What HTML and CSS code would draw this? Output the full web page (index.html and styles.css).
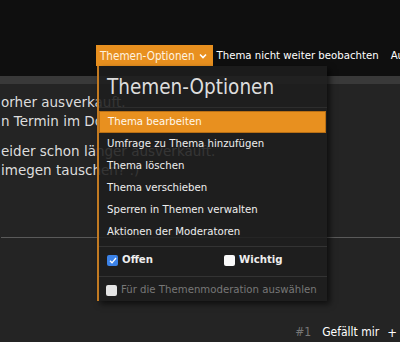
FILE: index.html
```html
<!DOCTYPE html>
<html lang="de">

<head>
    <meta charset="UTF-8">
    <meta name="viewport" content="width=device-width, initial-scale=1.0">
    <title>Themen-Optionen</title>
    <link rel="stylesheet" href="styles.css">
</head>

<body>
    <div class="topbar">
        <nav class="topic-nav">
            <div class="tab-wrap">
                <a class="tab active">Themen-Optionen
                    <svg class="chev" width="8" height="6" viewBox="0 0 8 6"><path d="M1 1.5 L4 4.5 L7 1.5" fill="none" stroke="#fff" stroke-width="1.6"/></svg>
                </a>
                <div class="menu">
                    <h3 class="menu-title">Themen-Optionen</h3>
                    <ul class="menu-list">
                        <li class="selected">Thema bearbeiten</li>
                        <li>Umfrage zu Thema hinzufügen</li>
                        <li>Thema löschen</li>
                        <li>Thema verschieben</li>
                        <li>Sperren in Themen verwalten</li>
                        <li>Aktionen der Moderatoren</li>
                    </ul>
                    <div class="menu-checks">
                        <label class="check"><span class="box checked">
                            <svg width="8" height="7" viewBox="0 0 8 7"><path d="M1 3.8 L3 5.8 L7 1" fill="none" stroke="#fff" stroke-width="1.3"/></svg>
                        </span>Offen</label>
                        <label class="check"><span class="box"></span>Wichtig</label>
                    </div>
                    <div class="menu-footer">
                        <label class="check muted"><span class="box"></span>Für die Themenmoderation auswählen</label>
                    </div>
                </div>
            </div>
            <a class="tab">Thema nicht weiter beobachten</a>
            <a class="tab">Aufrufe</a>
        </nav>
    </div>
    <div class="band"></div>

    <div class="post">
        <p>orher ausverkauft.</p>
        <p>n Termin im Dom.</p>
        <p class="gap">eider schon länger ausverkauft.</p>
        <p>imegen tauschen? :)</p>
        <hr class="post-rule">
    </div>

    <div class="post-footer">
        <span class="post-num">#1</span>
        <span class="like">Gefällt mir</span>
        <span class="plus">+</span>
    </div>
</body>

</html>
```

FILE: styles.css
```css
html,
body {
    margin: 0;
    padding: 0;
}

body {
    width: 400px;
    height: 342px;
    overflow: hidden;
    background: #242424;
    font-family: "DejaVu Sans Condensed", "DejaVu Sans", sans-serif;
    font-size: 11.3px;
    color: #eee;
}

.topbar {
    height: 76px;
    background: #0f0f0f;
    display: flex;
    align-items: flex-start;
}

.topic-nav {
    display: flex;
    margin: 45px 0 0 96px;
    white-space: nowrap;
}

.tab-wrap {
    position: relative;
}

.tab {
    display: flex;
    align-items: center;
    height: 21px;
    padding: 0 6px;
    color: #fff;
}

.tab.active {
    background: #e8901f;
    color: #fff3e0;
    font-size: 11.6px;
    padding: 0 6px 0 4px;
}

.tab-wrap + .tab {
    padding-left: 4px;
}

.chev {
    flex: none;
    margin-left: 4px;
}

.band {
    height: 8px;
    background: #393939;
}

.post {
    padding: 9px 0 0 1px;
    font-family: "DejaVu Sans", sans-serif;
    font-size: 13.5px;
    color: #ddd;
}

.post p {
    margin: 0;
    line-height: 19px;
}

.post p.gap {
    margin-top: 11px;
}

.post-rule {
    border: 0;
    border-top: 1px solid #5a5a5a;
    margin: 57px 0 0;
}

.post-footer {
    position: absolute;
    right: 3px;
    bottom: 2px;
    display: flex;
    font-size: 12px;
}

.post-num {
    color: #777;
    margin-right: 11px;
}

.like,
.plus {
    color: #fff;
}

.plus {
    margin-left: 8px;
    font-size: 13px;
}

/* dropdown */
.menu {
    position: absolute;
    top: 21px;
    left: 1px;
    width: 228px;
    background: rgba(30, 30, 30, 0.88);
    border-left: 2px solid #c27a22;
    box-shadow: 3px 3px 6px rgba(0, 0, 0, 0.6);
    z-index: 5;
}

.menu-title {
    margin: 0;
    padding: 9px 8px 8px;
    font-size: 20.5px;
    font-weight: normal;
    color: #ddd;
    border-bottom: 1px solid #2d2d2d;
}

.menu-list {
    list-style: none;
    margin: 0;
    padding: 3px 0 3px;
    border-bottom: 1px solid #333;
}

.menu-list li {
    padding: 0 8px;
    height: 22px;
    line-height: 22px;
    margin: 0 1px 0 0;
}

.menu-list li.selected {
    background: #e8901f;
    border: 1px solid #b86f15;
    height: 20px;
    line-height: 20px;
    color: #fff8ec;
}

.menu-checks {
    display: flex;
    padding: 6px 8px 9px;
    border-bottom: 1px solid #333;
}

.menu-checks .check {
    font-weight: bold;
}

.menu-checks .check:first-child {
    flex: none;
    width: 117px;
}

.check {
    display: flex;
    align-items: center;
    gap: 4px;
    line-height: 14px;
}

.box {
    flex: none;
    width: 11px;
    height: 11px;
    border-radius: 2px;
    background: #fafafa;
    display: flex;
    align-items: center;
    justify-content: center;
}

.box.checked {
    background: #3b82e8;
}

.menu-footer {
    padding: 6px 8px 4px 7px;
}

.check.muted {
    color: #777;
}

.check.muted .box {
    background: #e4e4e4;
}
```
